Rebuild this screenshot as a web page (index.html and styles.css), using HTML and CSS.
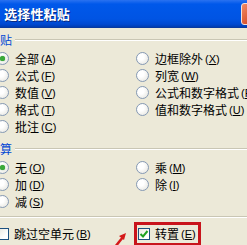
FILE: index.html
```html
<!DOCTYPE html>
<html lang="zh-CN">
<head>
  <meta charset="UTF-8" />
  <title>选择性粘贴</title>
  <link rel="stylesheet" href="styles.css">
</head>
<body>
  <div class="paste-dialog">
    <div class="titlebar">
      <span class="title">选择性粘贴</span>
      <span class="close-btn"></span>
    </div>

    <div class="dialog-body">
      <div class="group-title"><span>粘贴</span><i></i></div>
      <div class="options">
        <label class="opt"><span class="radio checked"></span>全部 <span class="key">(<u>A</u>)</span></label>
        <label class="opt"><span class="radio"></span>边框除外 <span class="key">(<u>X</u>)</span></label>
        <label class="opt"><span class="radio"></span>公式 <span class="key">(<u>F</u>)</span></label>
        <label class="opt"><span class="radio"></span>列宽 <span class="key">(<u>W</u>)</span></label>
        <label class="opt"><span class="radio"></span>数值 <span class="key">(<u>V</u>)</span></label>
        <label class="opt"><span class="radio"></span>公式和数字格式 <span class="key">(<u>R</u>)</span></label>
        <label class="opt"><span class="radio"></span>格式 <span class="key">(<u>T</u>)</span></label>
        <label class="opt"><span class="radio"></span>值和数字格式 <span class="key">(<u>U</u>)</span></label>
        <label class="opt"><span class="radio"></span>批注 <span class="key">(<u>C</u>)</span></label>
      </div>

      <div class="group-title second"><span>运算</span><i></i></div>
      <div class="options">
        <label class="opt"><span class="radio checked"></span>无 <span class="key">(<u>O</u>)</span></label>
        <label class="opt"><span class="radio"></span>乘 <span class="key">(<u>M</u>)</span></label>
        <label class="opt"><span class="radio"></span>加 <span class="key">(<u>D</u>)</span></label>
        <label class="opt"><span class="radio"></span>除 <span class="key">(<u>I</u>)</span></label>
        <label class="opt"><span class="radio"></span>减 <span class="key">(<u>S</u>)</span></label>
      </div>

      <div class="separator"></div>

      <div class="checks">
        <label class="chk"><span class="checkbox"></span>跳过空单元 <span class="key">(<u>B</u>)</span></label>
        <label class="chk marked">
          <span class="checkbox">
            <svg width="10" height="10" viewBox="0 0 10 10"><path d="M1.5 5 L4 7.5 L8.5 2" fill="none" stroke="#21a121" stroke-width="2"/></svg>
          </span>转置 <span class="key">(<u>E</u>)</span>
        </label>
      </div>
    </div>

    <svg class="arrow" width="16" height="16" viewBox="0 0 16 16">
      <path d="M3 16 L11 6" stroke="#d41a1a" stroke-width="2.5" fill="none"/>
      <path d="M14 2 L7 5 L12 9 Z" fill="#d41a1a"/>
    </svg>
  </div>
</body>
</html>
```

FILE: styles.css
```css
:root {
  --dlg-bg: #ece9d8;
  --xp-blue: #0054e3;
  --group-blue: #0046d5;
  --line: #c9c6b4;
  --mark-red: #c8141c;
}
body {
  margin: 0;
  padding: 0;
  background: var(--dlg-bg);
  overflow: hidden;
  font-family: "Noto Sans CJK SC", sans-serif;
  font-size: 12px;
  color: #000;
}
.paste-dialog {
  position: relative;
  width: 247px;
  height: 245px;
  overflow: hidden;
}
.titlebar {
  height: 27px;
  display: flex;
  align-items: center;
  background: linear-gradient(#2a72f0, #0058ea 15%, #0054e3 70%, #0048d0 90%, #003cb0);
  border-bottom: 1px solid #0839a0;
}
.title {
  flex: 1;
  padding-left: 4px;
  color: #fff;
  font-weight: bold;
  font-size: 13px;
  letter-spacing: 0.2px;
  text-shadow: 1px 1px 0 #0a2a80;
}
.close-btn {
  flex: none;
  width: 21px;
  height: 20px;
  margin-right: -17px;
  border: 1px solid #f4e0d8;
  border-radius: 3px;
  background: linear-gradient(135deg, #f08a68, #d9522b 60%, #c4401c);
}
.dialog-body {
  margin-left: -12px;
}
.group-title {
  display: flex;
  align-items: center;
  height: 14px;
  line-height: 14px;
  margin-top: 5px;
  color: var(--group-blue);
}
.group-title i {
  flex: 1;
  height: 1px;
  margin-left: 3px;
  background: var(--line);
  border-bottom: 1px solid #fff;
}
.group-title.second {
  margin-top: 7px;
}
.options {
  display: grid;
  grid-template-columns: 140px 1fr;
  grid-auto-rows: 17px;
  padding-left: 8px;
  margin-top: 3px;
}
.opt, .chk {
  display: flex;
  align-items: center;
  white-space: nowrap;
  line-height: 14px;
}
.key {
  font-family: "Liberation Sans", sans-serif;
  font-size: 11px;
  margin-left: 2px;
}
.radio {
  flex: none;
  width: 11px;
  height: 11px;
  margin-right: 6px;
  border: 1px solid #8599b4;
  border-radius: 50%;
  background: radial-gradient(circle at 35% 35%, #ffffff 30%, #e2e1da 100%);
  display: flex;
  align-items: center;
  justify-content: center;
}
.radio.checked::after {
  content: "";
  width: 5px;
  height: 5px;
  border-radius: 50%;
  background: #3aaa3a;
  box-shadow: 0 0 1px #2a8a2a;
}
.separator {
  height: 1px;
  margin-top: 6px;
  background: var(--line);
  border-bottom: 1px solid #fff;
}
.checks {
  display: grid;
  grid-template-columns: 137px auto;
  align-items: center;
  padding-left: 9px;
  margin-top: 4px;
}
.checkbox {
  flex: none;
  width: 10px;
  height: 10px;
  margin-right: 5px;
  border: 1px solid #1c5180;
  background: linear-gradient(135deg, #e8e8e0, #ffffff 70%);
  display: flex;
  align-items: center;
  justify-content: center;
}
.chk.marked {
  justify-self: start;
  height: 18px;
  padding: 0 2px 0 1px;
  border: 3px solid var(--mark-red);
}
.arrow {
  position: absolute;
  left: 112px;
  top: 231px;
}
```
